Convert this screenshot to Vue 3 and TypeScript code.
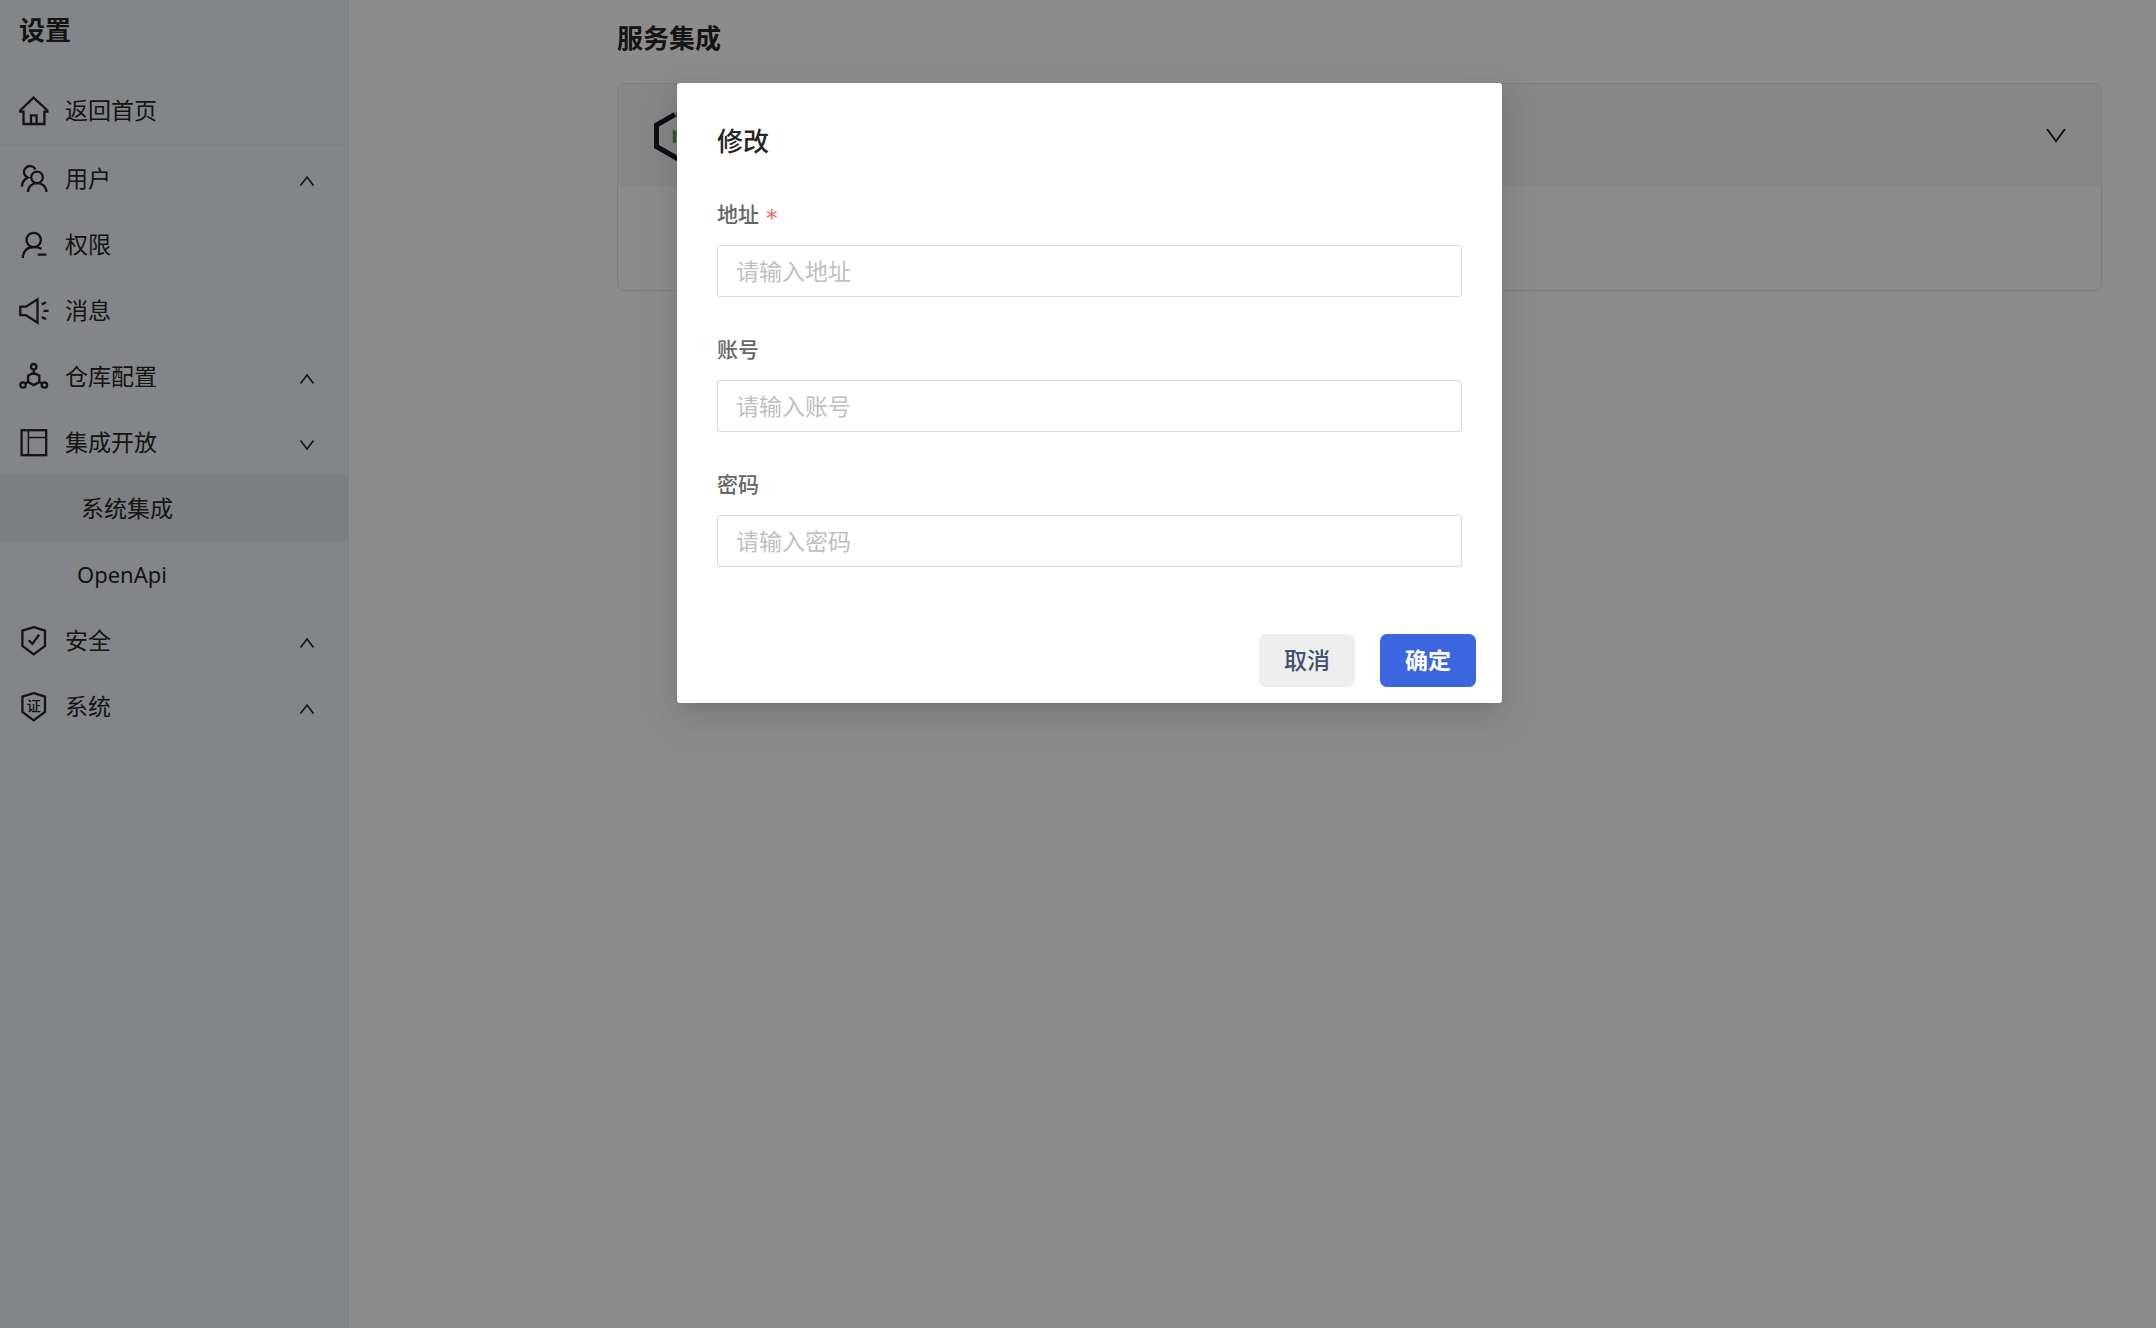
<script setup lang="ts">
import { reactive } from 'vue'

interface MenuItem {
  key: string
  label: string
  icon: string
  open?: boolean
  children?: { key: string; label: string }[]
}

const menu = reactive<MenuItem[]>([
  { key: 'user', label: '用户', icon: 'users', open: false, children: [] },
  { key: 'permission', label: '权限', icon: 'person' },
  { key: 'message', label: '消息', icon: 'horn' },
  { key: 'repository', label: '仓库配置', icon: 'network', open: false, children: [] },
  {
    key: 'integration',
    label: '集成开放',
    icon: 'panel',
    open: true,
    children: [
      { key: 'system', label: '系统集成' },
      { key: 'openapi', label: 'OpenApi' },
    ],
  },
  { key: 'security', label: '安全', icon: 'shield', open: false, children: [] },
  { key: 'sys', label: '系统', icon: 'license', open: false, children: [] },
])

const activeKey = 'system'

const fields = [
  { key: 'address', label: '地址', placeholder: '请输入地址', type: 'text', required: true },
  { key: 'account', label: '账号', placeholder: '请输入账号', type: 'text', required: false },
  { key: 'password', label: '密码', placeholder: '请输入密码', type: 'password', required: false },
]

const form = reactive<Record<string, string>>({ address: '', account: '', password: '' })
</script>

<template>
  <div class="layout">
    <aside class="sidebar">
      <h1 class="sidebar-title">设置</h1>
      <a href="#" class="row home">
        <svg class="icon" viewBox="0 0 30 30">
          <path d="M4.5 15.6H1.2V14.5L14.6 1.7L28.4 14.5V15.6H25.4V28H4.5ZM12 28V19.3H17.6V28" />
        </svg>
        <span>返回首页</span>
      </a>
      <nav>
        <template v-for="item in menu" :key="item.key">
          <button type="button" class="row" @click="item.open = !item.open">
            <svg class="icon" viewBox="0 0 30 30">
              <template v-if="item.icon === 'users'">
                <circle cx="18" cy="13.4" r="5.8" />
                <path d="M9 28C9 22.7 13 19.2 18.2 19.2S27.4 22.7 27.4 28" />
                <path d="M16.4 5.4A6 6 0 1 0 8.8 13.6C5 15.5 3 18.6 2.8 22.6" />
              </template>
              <template v-else-if="item.icon === 'person'">
                <circle cx="14.7" cy="10" r="7.2" />
                <path d="M3.8 28C3.8 21.5 8 17.2 14.5 17.2C17.5 17.2 20 17.6 22.6 18.8M18.7 24.7H27.3" />
              </template>
              <path
                v-else-if="item.icon === 'horn'"
                d="M1.3 10.6H7L18.5 3.4V26.6L7 19.2H1.3ZM22.7 8.4L27 6.3M24.5 14.8H29.6M22.7 21L27 23.2"
              />
              <template v-else-if="item.icon === 'network'">
                <circle cx="14.7" cy="4.7" r="2.7" />
                <circle cx="4" cy="23" r="2.7" />
                <circle cx="25.4" cy="23" r="2.7" />
                <path d="M14.7 10.7L20.3 13.8V20L14.7 23.1L9.1 20V13.8ZM14.7 7.4V10.7M6.5 21.6L9.1 20M22.9 21.6L20.3 20" />
              </template>
              <template v-else-if="item.icon === 'panel'">
                <rect x="2.6" y="2.2" width="24.6" height="25" />
                <path class="thin" d="M9.4 2.2V27.2M9.4 9.4H27.2" />
              </template>
              <template v-else>
                <path d="M14.7 1.2L26 4.6V20L14.7 28.4L3.4 20V4.6Z" />
                <path v-if="item.icon === 'shield'" d="M9.7 14.2L13.4 17.8L20.2 8.8" />
                <text v-else x="14.7" y="18.5" text-anchor="middle">证</text>
              </template>
            </svg>
            <span>{{ item.label }}</span>
            <svg v-if="item.children" class="caret" viewBox="0 0 16 12">
              <path :d="item.open ? 'M1.5 1.5L8 10L14.5 1.5' : 'M1.5 10.5L8 2L14.5 10.5'" />
            </svg>
          </button>
          <template v-if="item.open">
            <a
              v-for="child in item.children"
              :key="child.key"
              href="#"
              class="row child"
              :class="{ active: child.key === activeKey, latin: child.key === 'openapi' }"
              >{{ child.label }}</a
            >
          </template>
        </template>
      </nav>
    </aside>

    <main class="content">
      <h2 class="content-title">服务集成</h2>
      <section class="card">
        <header class="card-head">
          <svg class="logo" viewBox="0 0 54 58">
            <path d="M22 7.5L3.5 18V39.5L27 53L50.5 39.5V18L32 7.5" fill="none" stroke="#1b1c28" stroke-width="5" />
            <path d="M23 5L27 2L31 5V10L27 8L23 10Z" fill="#4bae6a" />
            <text x="18" y="36">r</text>
          </svg>
          <svg class="card-caret" viewBox="0 0 20 14">
            <path d="M1 0L10 12L19 0" />
          </svg>
        </header>
        <div class="card-body"></div>
      </section>
    </main>

    <div class="mask">
      <form class="dialog" role="dialog" aria-labelledby="dialog-title" @submit.prevent>
        <h3 id="dialog-title" class="dialog-title">修改</h3>
        <div v-for="field in fields" :key="field.key" class="field">
          <label :for="field.key">
            {{ field.label }}<span v-if="field.required" class="required">*</span>
          </label>
          <input :id="field.key" v-model="form[field.key]" :type="field.type" :placeholder="field.placeholder" />
        </div>
        <footer class="actions">
          <button type="button" class="btn">取消</button>
          <button type="submit" class="btn primary">确定</button>
        </footer>
      </form>
    </div>
  </div>
</template>

<style>
body {
  margin: 0;
  background: #fff;
}
</style>

<style scoped>
.layout {
  position: relative;
  display: flex;
  min-height: 100vh;
  font-family: 'Noto Sans', 'Noto Sans CJK SC', sans-serif;
  font-size: 23px;
  color: #262626;
}

.layout * {
  box-sizing: border-box;
}

.sidebar {
  flex: none;
  width: 349px;
  background: #f0f2f7;
  border-right: 1px solid #e6e8ee;
}

h1,
h2,
h3 {
  margin: 0;
  font-size: 26px;
  line-height: 40px;
}

.sidebar-title {
  padding: 10px 19px 25px;
}

.row {
  display: flex;
  align-items: center;
  width: 100%;
  height: 66px;
  padding: 0 33px 0 19px;
  border: 0;
  background: none;
  font: inherit;
  line-height: 34px;
  color: inherit;
  text-align: left;
  text-decoration: none;
}

.home {
  height: 70px;
  border-bottom: 1px solid #e8eaef;
}

.icon {
  flex: none;
  width: 30px;
  height: 30px;
  margin: 2px 16px 0 0;
  fill: none;
  stroke: #262626;
  stroke-width: 2.3;
}

.icon .thin {
  stroke-width: 1.5;
}

.icon text {
  font-size: 14px;
  font-weight: 500;
  fill: #262626;
  stroke: none;
}

.caret {
  width: 16px;
  height: 12px;
  margin: 6px 0 0 auto;
  fill: none;
  stroke: #262626;
  stroke-width: 1.6;
}

.child {
  padding-left: 81px;
}

.child.latin {
  padding-left: 77px;
  font-size: 22px;
}

.active {
  background: #e4e6ec;
}

.content {
  flex: 1;
  padding: 18px 54px 0 268px;
}

.card {
  margin-top: 25px;
  border: 1px solid #e6e6e6;
  border-radius: 7px;
  overflow: hidden;
}

.card-head {
  display: flex;
  align-items: center;
  justify-content: space-between;
  height: 103px;
  padding: 0 35px;
  background: #f6f6f6;
}

.card-body {
  height: 103px;
}

.logo {
  width: 54px;
  height: 58px;
}

.logo text {
  font-size: 23px;
  font-weight: 700;
  fill: #4bae6a;
}

.card-caret {
  width: 20px;
  height: 14px;
  fill: none;
  stroke: #262626;
  stroke-width: 2;
}

.mask {
  position: absolute;
  inset: 0;
  display: flex;
  justify-content: center;
  align-items: flex-start;
  padding: 83px 0 0 23px;
  background: rgba(0, 0, 0, 0.45);
}

.dialog {
  width: 825px;
  padding: 38px 40px 16px;
  border-radius: 3px;
  background: #fff;
  box-shadow:
    0 5px 10px -7px rgba(0, 0, 0, 0.12),
    0 10px 26px rgba(0, 0, 0, 0.08),
    0 15px 46px 13px rgba(0, 0, 0, 0.05);
}

.dialog-title {
  margin-bottom: 36px;
  font-weight: 500;
}

.field {
  margin-bottom: 35px;
}

.field label {
  display: block;
  margin-bottom: 14px;
  font-size: 21px;
  font-weight: 500;
  line-height: 34px;
  color: #666;
}

.required {
  margin-left: 7px;
  font-family: 'DejaVu Sans', sans-serif;
  font-size: 23px;
  font-weight: 400;
  line-height: 1;
  vertical-align: -4px;
  color: #f56457;
}

.field input {
  display: block;
  width: 100%;
  height: 52px;
  padding: 0 18px 1px;
  border: 1px solid #d9d9d9;
  border-radius: 3px;
  background: #fff;
  font: inherit;
  color: #262626;
  outline: none;
}

.field input::placeholder {
  color: #bfbfbf;
  opacity: 1;
}

.actions {
  display: flex;
  justify-content: flex-end;
  gap: 25px;
  margin: 67px -14px 0 0;
}

.btn {
  width: 96px;
  height: 53px;
  padding: 0 0 3px;
  border: 0;
  border-radius: 7px;
  background: #eee;
  font: inherit;
  font-weight: 500;
  color: #42526e;
}

.btn.primary {
  background: #3b66e0;
  font-weight: 700;
  color: #fff;
}
</style>
